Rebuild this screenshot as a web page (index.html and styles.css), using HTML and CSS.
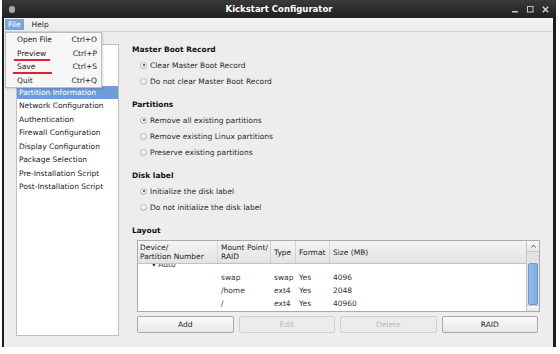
FILE: index.html
```html
<!DOCTYPE html>
<html lang="en">
<head>
    <meta charset="UTF-8">
    <meta name="viewport" content="width=device-width, initial-scale=1.0">
    <title>Kickstart Configurator</title>
    <link rel="stylesheet" href="styles.css">
</head>
<body>
    <div class="window">
        <div class="titlebar">
            <span class="app-icon"></span>
            <span class="title">Kickstart Configurator</span>
            <div class="controls">
                <svg width="7" height="7" viewBox="0 0 7 7"><rect x="0" y="5" width="6" height="1.5" fill="#c8c8c8"/></svg>
                <svg width="7" height="7" viewBox="0 0 7 7"><rect x="0.5" y="0.5" width="5.5" height="5.5" fill="none" stroke="#c8c8c8" stroke-width="1"/></svg>
                <svg width="7" height="7" viewBox="0 0 7 7"><path d="M0.8 0.8 L6.2 6.2 M6.2 0.8 L0.8 6.2" stroke="#d0d0d0" stroke-width="1.5"/></svg>
            </div>
        </div>

        <div class="menubar">
            <span class="menu-title active">File</span>
            <span class="menu-title">Help</span>
        </div>

        <!-- File menu, dropped open over the page -->
        <div class="dropdown">
            <div class="menu-item"><span>Open File</span><span>Ctrl+O</span></div>
            <div class="menu-item"><span class="marked mark-preview">Preview</span><span>Ctrl+P</span></div>
            <div class="menu-item"><span class="marked mark-save">Save</span><span>Ctrl+S</span></div>
            <div class="menu-item"><span>Quit</span><span>Ctrl+Q</span></div>
        </div>

        <div class="main">
            <ul class="sections">
                <!-- first rows sit under the open menu -->
                <li class="covered">Basic Configuration</li>
                <li class="covered">Installation Method</li>
                <li class="covered">Boot Loader Options</li>
                <li class="selected">Partition Information</li>
                <li>Network Configuration</li>
                <li>Authentication</li>
                <li>Firewall Configuration</li>
                <li>Display Configuration</li>
                <li>Package Selection</li>
                <li>Pre-Installation Script</li>
                <li>Post-Installation Script</li>
            </ul>

            <div class="content">
                <div class="group">
                    <div class="group-title">Master Boot Record</div>
                    <label class="radio"><span class="dot checked"></span>Clear Master Boot Record</label>
                    <label class="radio"><span class="dot"></span>Do not clear Master Boot Record</label>
                </div>

                <div class="group">
                    <div class="group-title">Partitions</div>
                    <label class="radio"><span class="dot checked"></span>Remove all existing partitions</label>
                    <label class="radio"><span class="dot"></span>Remove existing Linux partitions</label>
                    <label class="radio"><span class="dot"></span>Preserve existing partitions</label>
                </div>

                <div class="group">
                    <div class="group-title">Disk label</div>
                    <label class="radio"><span class="dot checked"></span>Initialize the disk label</label>
                    <label class="radio"><span class="dot"></span>Do not initialize the disk label</label>
                </div>

                <div class="group layout">
                    <div class="group-title">Layout</div>
                    <div class="table">
                        <div class="table-view">
                            <div class="row head">
                                <div class="cell">Device/<br>Partition Number</div>
                                <div class="cell">Mount Point/<br>RAID</div>
                                <div class="cell">Type</div>
                                <div class="cell">Format</div>
                                <div class="cell">Size (MB)</div>
                            </div>
                            <div class="rows">
                                <div class="row first">
                                    <div class="cell tree">&#9662; Auto</div>
                                    <div class="cell"></div>
                                    <div class="cell"></div>
                                    <div class="cell"></div>
                                    <div class="cell"></div>
                                </div>
                                <div class="row">
                                    <div class="cell"></div>
                                    <div class="cell">swap</div>
                                    <div class="cell">swap</div>
                                    <div class="cell">Yes</div>
                                    <div class="cell">4096</div>
                                </div>
                                <div class="row">
                                    <div class="cell"></div>
                                    <div class="cell">/home</div>
                                    <div class="cell">ext4</div>
                                    <div class="cell">Yes</div>
                                    <div class="cell">2048</div>
                                </div>
                                <div class="row">
                                    <div class="cell"></div>
                                    <div class="cell">/</div>
                                    <div class="cell">ext4</div>
                                    <div class="cell">Yes</div>
                                    <div class="cell">40960</div>
                                </div>
                            </div>
                        </div>
                        <div class="scrollbar">
                            <div class="arrow up">
                                <svg width="5" height="4" viewBox="0 0 5 4"><path d="M0.5 3.5 L2.5 1 L4.5 3.5" fill="none" stroke="#555" stroke-width="1"/></svg>
                            </div>
                            <div class="trough"></div>
                            <div class="thumb"></div>
                            <div class="arrow down"></div>
                        </div>
                    </div>
                    <div class="buttons">
                        <button>Add</button>
                        <button disabled>Edit</button>
                        <button disabled>Delete</button>
                        <button>RAID</button>
                    </div>
                </div>
            </div>
        </div>
    </div>
</body>
</html>
```

FILE: styles.css
```css
body {
    margin: 0;
    background: #fff;
    font-family: "DejaVu Sans", sans-serif;
    font-size: 7.5px;
    color: #222;
}
.window {
    position: relative;
    box-sizing: border-box;
    width: 554px;
    height: 347px;
    margin-left: 2px;
    background: #ededed;
    border-left: 2px solid #1c1c1c;
    border-right: 3px solid #1c1c1c;
}
.titlebar {
    display: grid;
    grid-template-columns: 1fr auto 1fr;
    align-items: center;
    height: 18px;
    margin: 0 -3px 0 -2px;
    background: linear-gradient(#3a3a3a, #1f1f1f);
}
.app-icon {
    width: 6px;
    height: 7px;
    margin-left: 7px;
    border-radius: 3px;
    background: #a9a9a9;
}
.title {
    color: #fff;
    font-weight: bold;
    font-size: 8.5px;
}
.controls {
    display: flex;
    justify-content: flex-end;
    align-items: center;
    gap: 8px;
    padding-right: 7px;
}
.menubar {
    display: flex;
    align-items: center;
    height: 13px;
    padding-left: 1px;
    background: linear-gradient(#f3f3f3, #ebebeb);
    border-bottom: 1px solid #d2d2d2;
}
.menu-title {
    padding: 1px 3px;
    margin-right: 5px;
}
.menu-title.active {
    background: #7ca6da;
    color: #fff;
}
.dropdown {
    position: absolute;
    left: 1px;
    top: 32px;
    width: 97px;
    box-sizing: border-box;
    background: #f6f6f6;
    border: 1px solid #bdbdbd;
    box-shadow: 1px 1px 2px rgba(0, 0, 0, 0.15);
    z-index: 2;
}
.menu-item {
    display: flex;
    justify-content: space-between;
    align-items: center;
    height: 13.5px;
    padding: 0 4px 0 11px;
}
.marked {
    position: relative;
}
.marked::after {
    content: "";
    position: absolute;
    bottom: -3px;
    height: 2px;
    background: #e3202b;
}
.mark-preview::after {
    left: -3px;
    right: -4px;
}
.mark-save::after {
    left: -4px;
    right: -17px;
}
.main {
    display: grid;
    grid-template-columns: 103px 1fr;
    column-gap: 13px;
    padding: 11px 13px 0 12px;
}
.sections {
    list-style: none;
    margin: 1px 0 0;
    padding: 0;
    height: 292px;
    box-sizing: border-box;
    background: #fff;
    border: 1px solid #bfbfbf;
}
.sections li {
    height: 13.5px;
    line-height: 13.5px;
    padding-left: 2px;
    white-space: nowrap;
}
.sections li.covered {
    visibility: hidden;
}
.sections li.selected {
    background: #6e9dd9;
    color: #fff;
}
.group {
    margin-bottom: 9px;
}
.group-title {
    height: 14px;
    line-height: 14px;
    font-weight: bold;
    color: #111;
}
.radio {
    display: flex;
    align-items: center;
    gap: 3px;
    height: 16px;
    padding-left: 8px;
    color: #2a2a2a;
}
.dot {
    position: relative;
    width: 7px;
    height: 7px;
    box-sizing: border-box;
    border: 1px solid #b4b4b4;
    border-radius: 50%;
    background: linear-gradient(#fff, #e4e4e4);
}
.dot.checked::after {
    content: "";
    position: absolute;
    left: 1.5px;
    top: 1.5px;
    width: 2px;
    height: 2px;
    border-radius: 50%;
    background: #333;
}
.table {
    display: flex;
    height: 72px;
    box-sizing: border-box;
    margin: 2px 0 0 5px;
    background: #fff;
    border: 1px solid #ababab;
}
.table-view {
    flex: 1;
    overflow: hidden;
}
.row {
    display: grid;
    grid-template-columns: 80px 53px 25px 34px 1fr;
    height: 13px;
    align-items: center;
    color: #333;
}
.row .cell {
    padding-left: 3px;
    white-space: nowrap;
}
.row.head {
    height: 22px;
    align-items: stretch;
    background: linear-gradient(#f4f4f4, #e3e3e3);
    border-bottom: 1px solid #c2c2c2;
    color: #222;
}
.row.head .cell {
    display: flex;
    align-items: center;
    line-height: 9px;
    border-right: 1px solid #d3d3d3;
}
.row.head .cell:first-child {
    padding-left: 2px;
}
.row.head .cell:last-child {
    border-right: none;
}
.rows {
    height: 47px;
    overflow: hidden;
}
.row.first {
    margin-top: -6px;
}
.cell.tree {
    padding-left: 14px;
}
.scrollbar {
    display: flex;
    flex-direction: column;
    width: 12px;
    background: #e2e2e2;
    border-left: 1px solid #c4c4c4;
}
.arrow {
    display: flex;
    justify-content: center;
    align-items: center;
    background: linear-gradient(#fafafa, #e6e6e6);
    border-bottom: 1px solid #c8c8c8;
}
.arrow.up {
    height: 10px;
}
.arrow.down {
    height: 5px;
    border-bottom: none;
    border-top: 1px solid #c8c8c8;
}
.trough {
    height: 11px;
}
.thumb {
    flex: 1;
    margin: 0 1px;
    background: linear-gradient(90deg, #94bbeb, #7eaae2);
    border: 1px solid #6c98d2;
    border-radius: 2px;
}
.buttons {
    display: grid;
    grid-template-columns: repeat(4, 1fr);
    gap: 5px;
    margin: 4px 2px 0 5px;
}
button {
    height: 17px;
    padding: 0;
    font-family: "DejaVu Sans", sans-serif;
    font-size: 7.5px;
    color: #222;
    background: linear-gradient(#fbfbfb, #e7e7e7);
    border: 1px solid #a9a9a9;
    border-radius: 2px;
}
button:disabled {
    color: #b9b9b9;
    background: #ececec;
    border-color: #d0d0d0;
}
```
